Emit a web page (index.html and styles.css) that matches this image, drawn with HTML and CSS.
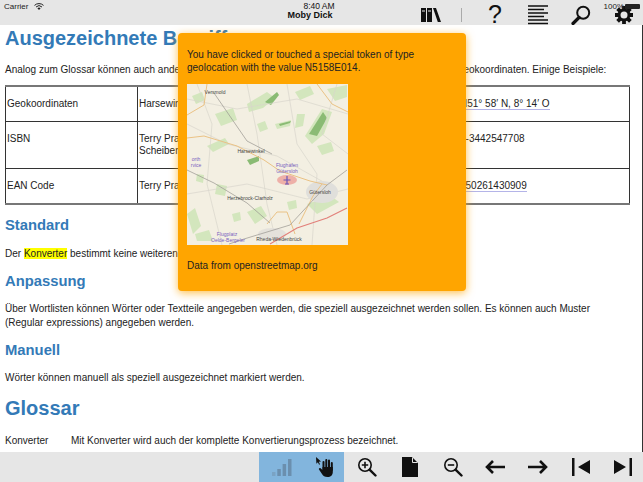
FILE: index.html
```html
<!DOCTYPE html>
<html lang="de">

<head>
    <meta charset="UTF-8">
    <title>Moby Dick</title>

    <link rel="stylesheet" href="styles.css">

</head>

<body>
    <div class="app">
        <header class="topbar">
            <div class="status">
                <span>Carrier</span>
                <svg class="wifi" viewBox="0 0 10 7" width="10" height="7">
                    <path d="M0.5 2.400a6.500 6.500 0 0 1 9 0M2 4a4.300 4.300 0 0 1 6 0" fill="none" stroke="#222" stroke-width="1"/>
                    <path d="M3.400 5.200a2.400 2.400 0 0 1 3.200 0L5 6.900z" fill="#222"/>
                </svg>
            </div>
            <div class="titel">
                <span>8:40 AM</span>
                <strong>Moby Dick</strong>
            </div>
            <nav class="tools">
                <svg viewBox="0 0 20 14" width="20" height="14">
                    <path d="M0 0h5v14H0zM6 0h5v14H6zM12 0h3l5 14h-3.200z" fill="#111"/>
                    <path d="M1 3h3M7 3h3" stroke="#e6e6e6" stroke-width="1"/>
                </svg>
                <span class="skille"></span>
                <span class="hjaelp">?</span>
                <svg viewBox="0 0 20 20" width="20" height="20">
                    <path d="M0 1h20M0 4.500h16M0 8h20M0 11.500h16M0 15h20M0 18.500h20" stroke="#111" stroke-width="1.500"/>
                </svg>
                <svg viewBox="0 0 20 20" width="20" height="20">
                    <circle cx="12.200" cy="7.800" r="6" fill="none" stroke="#111" stroke-width="2"/>
                    <path d="M8 12.500L2 18.500" stroke="#111" stroke-width="3.200" stroke-linecap="round"/>
                </svg>
                <svg viewBox="0 0 20 20" width="20" height="20">
                    <path d="M10 1v18M1 10h18M3.600 3.600l12.800 12.800M16.400 3.600L3.600 16.400" stroke="#111" stroke-width="3.800"/>
                    <circle cx="10" cy="10" r="6.500" fill="#111"/>
                    <circle cx="10" cy="10" r="3.500" fill="#e6e6e6"/>
                </svg>
            </nav>
            <div class="batteri">
                <span>100%</span>
                <span class="batteri-ikon"></span>
            </div>
        </header>

        <main class="indhold">
            <h1>Ausgezeichnete Begriffe</h1>
            <p>Analog zum Glossar können auch andere Begriffe ausgezeichnet werden, wie ISBN, EAN Codes und Geokoordinaten. Einige Beispiele:</p>

            <table>
                <tr>
                    <td class="kol1">Geokoordinaten</td>
                    <td class="kol2">Harsewinkel</td>
                    <td><span class="token">N51° 58′ N, 8° 14′ O</span></td>
                </tr>
                <tr>
                    <td class="kol1">ISBN</td>
                    <td class="kol2">Terry Pratchett: Die Farben der Magie, Roman aus der<br>Scheibenwelt</td>
                    <td>3-3442547708</td>
                </tr>
                <tr>
                    <td class="kol1">EAN Code</td>
                    <td class="kol2">Terry Pratchett: Die Farben der Magie</td>
                    <td><span class="token">750261430909</span></td>
                </tr>
            </table>

            <h2>Standard</h2>
            <p class="standard">Der <mark>Konverter</mark> bestimmt keine weiteren Begriffe.</p>

            <h2>Anpassung</h2>
            <p>Über Wortlisten können Wörter oder Textteile angegeben werden, die speziell ausgezeichnet werden sollen. Es können auch Muster (Regular expressions) angegeben werden.</p>

            <h2>Manuell</h2>
            <p>Wörter können manuell als speziell ausgezeichnet markiert werden.</p>

            <h1 class="glossar">Glossar</h1>
            <div class="ord">
                <span>Konverter</span>
                <span>Mit Konverter wird auch der komplette Konvertierungsprozess bezeichnet.</span>
            </div>
        </main>

        <footer class="bundbar">
            <div class="knap aktiv">
                <svg viewBox="0 0 20 17" width="20" height="17">
                    <path d="M0 13h3.500v4H0z" fill="#7aa3c4"/>
                    <path d="M5.300 10h3.500v7H5.300zM10.600 5h3.500v12h-3.500zM16 0h3.500v17H16z" fill="#6b8fae"/>
                </svg>
            </div>
            <div class="knap aktiv">
                <svg viewBox="0 0 18 20" width="18" height="20">
                    <path d="M0 0l5 4.500-2.200.3L4 7.200l-.9.5L1.900 5.300.4 6.800z" fill="#111"/>
                    <path d="M7.500 5v8M10.300 3v8M13 3.500v8M15.800 6v7" stroke="#111" stroke-width="2" stroke-linecap="round"/>
                    <path d="M6.500 10h10.300v5c0 3-2 5-5.300 5-2.800 0-4.500-1.300-5.500-3L3 12.500c-.6-1 .7-2 1.600-1.200L6.500 13z" fill="#111"/>
                </svg>
            </div>
            <div class="knap">
                <svg viewBox="0 0 20 20" width="20" height="20">
                    <circle cx="8" cy="8" r="6.200" fill="none" stroke="#111" stroke-width="1.600"/>
                    <path d="M4.800 8h6.400M8 4.800v6.400" stroke="#111" stroke-width="1.600"/>
                    <path d="M12.800 12.800L18.500 18.500" stroke="#111" stroke-width="2.400" stroke-linecap="round"/>
                </svg>
            </div>
            <div class="knap">
                <svg viewBox="0 0 16 20" width="16" height="20">
                    <path d="M0 0h10l6 6v14H0z" fill="#111"/>
                    <path d="M10.500 0.500v5h5" fill="none" stroke="#e6e6e6" stroke-width="1"/>
                </svg>
            </div>
            <div class="knap">
                <svg viewBox="0 0 20 20" width="20" height="20">
                    <circle cx="8" cy="8" r="6.200" fill="none" stroke="#111" stroke-width="1.600"/>
                    <path d="M4.800 8h6.400" stroke="#111" stroke-width="1.600"/>
                    <path d="M12.800 12.800L18.500 18.500" stroke="#111" stroke-width="2.400" stroke-linecap="round"/>
                </svg>
            </div>
            <div class="knap">
                <svg viewBox="0 0 20 14" width="20" height="14">
                    <path d="M20 7H2M8 1L2 7l6 6" fill="none" stroke="#111" stroke-width="2.600"/>
                </svg>
            </div>
            <div class="knap">
                <svg viewBox="0 0 20 14" width="20" height="14">
                    <path d="M0 7h18M12 1l6 6-6 6" fill="none" stroke="#111" stroke-width="2.600"/>
                </svg>
            </div>
            <div class="knap">
                <svg viewBox="0 0 18 18" width="18" height="18">
                    <path d="M0 0h2.500v18H0zM18 2v14L6 9z" fill="#111"/>
                </svg>
            </div>
            <div class="knap">
                <svg viewBox="0 0 18 18" width="18" height="18">
                    <path d="M18 0h-2.500v18H18zM0 2v14l12-7z" fill="#111"/>
                </svg>
            </div>
        </footer>

        <aside class="popup">
            <p>You have clicked or touched a special token of type geolocation with the value N5158E014.</p>
            <svg class="kort" viewBox="0 0 161 161" width="161" height="161">
                <rect width="161" height="161" fill="#f3efe2"/>
                <g fill="#d3e6bd">
                    <path d="M60 20l20-12 8 6-12 10-14 4z"/>
                    <path d="M118 52l17-27 10 3-8 22-12 10z"/>
                    <path d="M88 40l16-4-1 6-13 3z"/>
                    <path d="M108 8l15-6 4 8-14 6z"/>
                    <path d="M28 30l18-6 4 12-16 6z"/>
                    <path d="M140 5l20-4v12l-12 4z"/>
                    <path d="M60 128l14-6 6 10-12 8z"/>
                    <path d="M0 130l8-6 6 18-8 8z"/>
                    <path d="M8 150l14-4 4 11H10z"/>
                    <path d="M110 30l8 0-2 12-8 2z"/>
                    <path d="M20 62l18-8 4 6-16 8z"/>
                    <path d="M120 120l24-8 8 6-22 12z"/>
                    <path d="M30 100l10 2-2 10-10-2z"/>
                    <path d="M5 12l10-4 3 8-9 4z"/>
                    <path d="M70 40l8-3 3 8-8 3z"/>
                    <path d="M130 62l14-4 3 9-12 4z"/>
                    <path d="M45 130l8-2 1 8-7 2z"/>
                    <path d="M100 118l9-2 1 8-8 2z"/>
                    <path d="M10 90l7 1-1 8-7-2z"/>
                </g>
                <g fill="#8abb74">
                    <path d="M78 18l12-10 2 3-8 10z"/>
                    <path d="M122 50l14-22 4 6-10 18z"/>
                    <path d="M92 40l12-3-1 2-10 3z"/>
                    <path d="M60 76l12-4 0 5-9 4z"/>
                </g>
                <g fill="none" stroke="#d8d5cc" stroke-width="0.700">
                    <path d="M0 40L40 60L90 72L140 100"/>
                    <path d="M10 0L25 40L20 100L35 161"/>
                    <path d="M60 0L70 50L80 120L90 161"/>
                    <path d="M100 0L110 60L130 90L125 161"/>
                    <path d="M0 110L60 100L120 115L161 105"/>
                    <path d="M150 0L135 50L161 70"/>
                    <path d="M0 15L50 25L110 15L161 30"/>
                </g>
                <ellipse cx="135" cy="108" rx="16" ry="11" fill="#e0dfdb"/>
                <ellipse cx="100" cy="96" rx="10" ry="5" fill="#eeb0a8"/>
                <ellipse cx="85" cy="150" rx="14" ry="6" fill="#e4e1db"/>
                <g fill="none" stroke="#eac285" stroke-width="1">
                    <path d="M0 31L17 21L20 0"/>
                    <path d="M0 54L17 52L50 62L77 76L93 87L123 97L140 101"/>
                    <path d="M130 0L145 20L161 28"/>
                    <path d="M80 140L90 128L100 128L108 150"/>
                    <path d="M112 140L126 112L135 100"/>
                </g>
                <g fill="none" stroke="#98958f" stroke-width="0.700">
                    <path d="M27 9L60 57L85 70"/>
                    <path d="M0 86L27 99L60 119L83 139"/>
                    <path d="M160 86L140 101L103 141L57 155L42 160"/>
                </g>
                <path d="M160 124L140 134L110 144L83 160" fill="none" stroke="#e2807a" stroke-width="1.200"/>
                <path d="M100 92v8M96.500 96h7M98 100h4" stroke="#6a55b5" stroke-width="1.200"/>
                <g class="by">
                    <text x="28" y="10">Versmold</text>
                    <text x="64" y="69">Harsewinkel</text>
                    <text x="63" y="116">Herzebrock-Clarholz</text>
                    <text x="133" y="110">Gütersloh</text>
                    <text x="92" y="157">Rheda-Wiedenbrück</text>
                </g>
                <g class="by lufthavn">
                    <text x="100" y="83">Flughafen</text>
                    <text x="100" y="89">Gütersloh</text>
                    <text x="40" y="152">Flugplatz</text>
                    <text x="41" y="158">Oelde-Bergeler</text>
                    <text x="9" y="77">orth</text>
                    <text x="9" y="83">rvice</text>
                </g>
            </svg>
            <p class="kilde">Data from openstreetmap.org</p>
        </aside>
    </div>
</body></html>
```

FILE: styles.css
```css
* {
    box-sizing: border-box;
}

body {
    margin: 0;
    font-family: "Liberation Sans", Arial, sans-serif;
    font-size: 10px;
    line-height: 14px;
    color: #222;
    background: white;
}

.app {
    position: relative;
    display: flex;
    flex-direction: column;
    height: 482px;
    overflow: hidden;
}

/* top */
.topbar {
    position: relative;
    display: flex;
    flex: none;
    height: 25px;
    background-color: #e6e6e6;
}

.status {
    flex: 1;
    display: flex;
    align-items: flex-start;
    gap: 6px;
    padding: 2px 0 0 4px;
    font-size: 8px;
    line-height: 10px;
}

.wifi {
    margin-top: 1px;
}

.titel {
    display: flex;
    flex-direction: column;
    align-items: center;
    padding-top: 2px;
    font-size: 8.500px;
    line-height: 9px;
    color: #111;
}

.titel strong {
    margin-right: 18px;
    font-size: 9px;
}

.tools {
    flex: 1;
    display: flex;
    justify-content: flex-end;
    align-items: center;
    gap: 23px;
    padding: 4px 9px 0 0;
}

.skille {
    width: 1px;
    height: 14px;
    margin-left: -3px;
    background-color: #aaa;
}

.hjaelp {
    width: 20px;
    height: 21px;
    font-size: 25px;
    line-height: 21px;
    text-align: center;
    color: #111;
}

.batteri {
    position: absolute;
    top: 2px;
    right: 3px;
    display: flex;
    align-items: center;
    gap: 1px;
    font-size: 8px;
    line-height: 9px;
}

.batteri-ikon {
    width: 15px;
    height: 5px;
    border-radius: 1px;
    background-color: #222;
}

/* tekst */
.indhold {
    flex: 1;
    padding: 0 13px 0 5px;
    border-right: 1px solid #333;
    overflow: hidden;
}

h1 {
    margin: 0;
    padding-top: 1px;
    font-size: 20px;
    line-height: 25px;
    font-weight: bold;
    color: #337ab7;
}

h2 {
    margin: 11px 0 0;
    font-size: 14.800px;
    line-height: 18px;
    font-weight: bold;
    color: #337ab7;
}

p {
    margin: 0;
    padding-top: 12px;
}

p.standard {
    padding-top: 13px;
}

table {
    width: 625px;
    margin-top: 8px;
    border-collapse: collapse;
    border-top: 2px solid #777;
    border-left: 1px solid #333;
    border-right: 1px solid #333;
    border-bottom: 2px solid #777;
}

td {
    padding: 11px 1px;
    border: 1px solid #333;
    vertical-align: baseline;
    line-height: 12px;
}

.kol1 {
    width: 132px;
}

.kol2 {
    width: 321px;
}

.token {
    border-bottom: 1px solid #b4b4e8;
}

mark {
    background-color: #ff0;
    color: inherit;
}

.glossar {
    margin-top: 10px;
}

.ord {
    display: grid;
    grid-template-columns: 66px 1fr;
    padding-top: 13px;
}

/* bund */
.bundbar {
    display: flex;
    flex: none;
    height: 30px;
    padding-left: 259px;
    background-color: #e6e6e6;
}

.knap {
    display: flex;
    flex: none;
    align-items: center;
    justify-content: center;
    width: 42.700px;
    padding-left: 3px;
}

.aktiv {
    background-color: #82b5dd;
}

/* popup */
.popup {
    position: absolute;
    left: 178px;
    top: 33px;
    width: 288px;
    height: 258px;
    padding: 15px 9px 9px;
    border-radius: 4px;
    background-color: orange;
    box-shadow: 0 2px 8px rgba(255, 165, 0, 0.7);
    color: #222;
}

.popup p {
    padding: 0;
    line-height: 13px;
}

.kort {
    display: block;
    margin-top: 10px;
}

.popup .kilde {
    margin-top: 14px;
}

.by {
    font-size: 5px;
    text-anchor: middle;
    fill: #444;
}

.lufthavn {
    fill: #7a5fc0;
}
```
